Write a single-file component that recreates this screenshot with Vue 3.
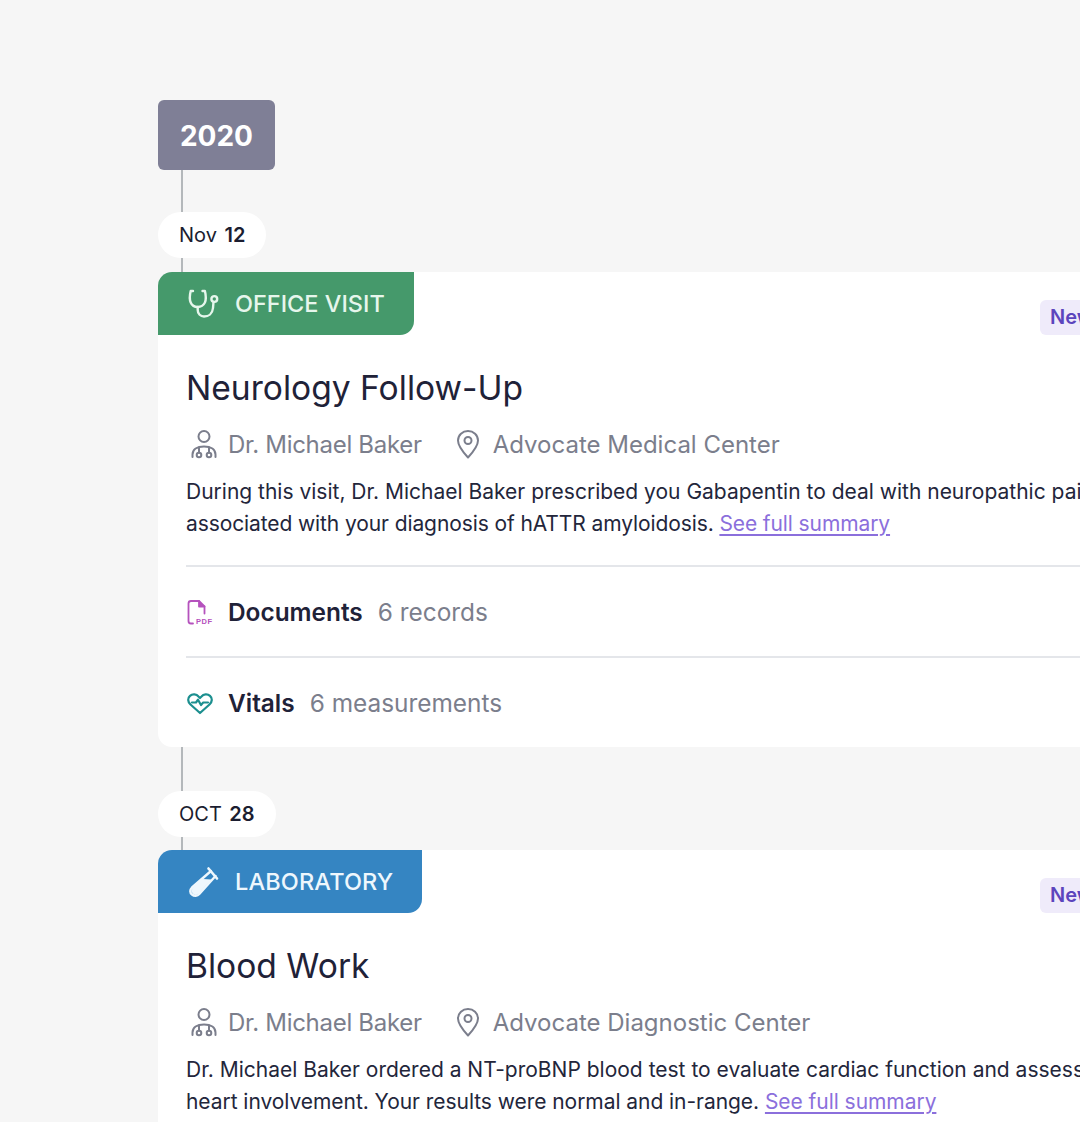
<script setup>
const visits = [
  {
    date: 'Nov',
    day: '12',
    kind: 'office',
    label: 'OFFICE VISIT',
    title: 'Neurology Follow-Up',
    place: 'Advocate Medical Center',
    lines: [
      'During this visit, Dr. Michael Baker prescribed you Gabapentin to deal with neuropathic pain',
      'associated with your diagnosis of hATTR amyloidosis.'
    ]
  },
  {
    date: 'OCT',
    day: '28',
    kind: 'lab',
    label: 'LABORATORY',
    title: 'Blood Work',
    place: 'Advocate Diagnostic Center',
    lines: [
      'Dr. Michael Baker ordered a NT-proBNP blood test to evaluate cardiac function and assess',
      'heart involvement. Your results were normal and in-range.'
    ]
  }
]
</script>

<template>
  <div class="page">
    <div class="year">2020</div>

    <template v-for="(v, i) in visits" :key="v.title">
      <div class="line" :class="i === 0 ? 'first' : 'next'"></div>
      <div class="pill"><span>{{ v.date }}</span><b>{{ v.day }}</b></div>
      <div class="line" :class="i === 0 ? 'short' : 'shorter'"></div>

      <div class="card" :class="i === 0 ? 'closed' : 'open'">
        <div class="head">
          <div class="tag" :class="v.kind">
            <svg v-if="v.kind === 'office'" width="32" height="32" viewBox="0 0 32 32" fill="none" stroke="currentColor" stroke-width="2.4" stroke-linecap="round" stroke-linejoin="round">
              <path d="M6 3H3.700C2.700 7 2.200 11 3.700 14.500 5 17.500 8 19 10.700 19s5.700-1.500 7.200-4.500C19.400 11 18.900 7 17.900 3H15.500" />
              <path d="M10.700 19v3c0 4 3 6.500 6.300 6.500 4.500 0 8.500-3 9-8.500l.5-6" />
              <circle cx="27.300" cy="11" r="2.900" />
            </svg>
            <svg v-else width="32" height="32" viewBox="0 0 32 32" fill="currentColor" stroke="currentColor" stroke-linecap="round" stroke-linejoin="round">
              <path d="M21.500 2.500l8.500 10" fill="none" stroke-width="2.600" />
              <path d="M24 5L5 21.500c-2.300 2.300-2.300 5.300 0 7 2.300 1.900 5.300 1.700 7.300-.5L28.500 10" fill="none" stroke-width="2.400" />
              <path d="M14.500 13.500l9.500.5L12 27c-1.800 1.800-4.300 2-6 .6-1.700-1.400-1.700-4 .1-5.800l8.400-8.300z" stroke-width="1" />
            </svg>
            <span>{{ v.label }}</span>
          </div>
          <div class="badge">New</div>
        </div>

        <div class="body">
          <h2>{{ v.title }}</h2>

          <div class="meta">
            <span class="who">
              <svg width="30" height="32" viewBox="0 0 30 32" fill="none" stroke="#7b7e8c" stroke-width="2" stroke-linecap="round">
                <circle cx="15" cy="8.500" r="5.500" />
                <path d="M3.500 29v-2.500c0-5 4.500-8 11.500-8s11.500 3 11.500 8V29" />
                <circle cx="10" cy="27" r="2.300" />
                <circle cx="20" cy="27" r="2.300" />
                <path d="M10 24.500v-5M20 24.500v-5" />
              </svg>
              <span class="name">Dr. Michael Baker</span>
            </span>
            <span class="where">
              <svg width="26" height="32" viewBox="0 0 26 32" fill="none" stroke="#7b7e8c" stroke-width="2" stroke-linejoin="round">
                <path d="M13 29.500C7 23 3 18 3 12.500 3 7 7.500 3 13 3s10 4 10 9.500C23 18 19 23 13 29.500z" />
                <circle cx="13" cy="12.500" r="3.500" />
              </svg>
              {{ v.place }}
            </span>
          </div>

          <p class="text">
            {{ v.lines[0] }}<br />
            <span class="second">{{ v.lines[1] }} <a href="#" class="more">See full summary</a></span>
          </p>

          <template v-if="i === 0">
            <div class="row docs">
              <svg width="28" height="28" viewBox="0 0 28 28" fill="none" stroke="#b552bd" stroke-width="1.800" stroke-linecap="round" stroke-linejoin="round">
                <path d="M7 25.500H5C3 25.500 2.500 24.500 2.500 23V5.500C2.500 4 3.500 3 5 3H13l5.500 5.500v7" />
                <path d="M13 3v5.500h5.500" fill="#b552bd" />
                <text x="10" y="25.500" class="pdf">PDF</text>
              </svg>
              <strong>Documents</strong>
              <span>6 records</span>
            </div>
            <div class="row">
              <svg width="28" height="28" viewBox="0 0 28 28" fill="none" stroke="#1c8f8f" stroke-width="2.200" stroke-linecap="round" stroke-linejoin="round">
                <path d="M14 24L4.500 15.500C1.500 12.500 1.500 9 4 6.800c2.500-2.200 6.500-1.800 8.500.7L14 9l1.500-1.500c2-2.500 6-2.900 8.500-.7 2.500 2.200 2.500 5.700-.5 8.700L14 24z" />
                <path d="M6 13.500h4l2-2.800 3 5.300 2.200-2.500H22" />
              </svg>
              <strong>Vitals</strong>
              <span>6 measurements</span>
            </div>
          </template>
        </div>
      </div>
    </template>
  </div>
</template>

<style>
html, body {
  margin: 0;
  background: #f6f6f6;
  overflow: hidden;
}
</style>

<style scoped>
.page {
  width: 1080px;
  height: 1122px;
  box-sizing: border-box;
  padding: 100px 0 0 158px;
  overflow: hidden;
  font-family: Inter, "Noto Sans", sans-serif;
  color: #1f2238;
}

.year {
  width: 117px;
  height: 70px;
  border-radius: 6px;
  background: #7f7f96;
  color: #fff;
  font-size: 28px;
  font-weight: 700;
  line-height: 72px;
  text-align: center;
}

.line {
  width: 2px;
  margin-left: 23px;
  background: #b4b8bb;
}
.line.first { height: 42px; }
.line.next { height: 44px; }
.line.short { height: 14px; }
.line.shorter { height: 13px; }

.pill {
  display: flex;
  width: fit-content;
  gap: 7.5px;
  height: 46px;
  align-items: center;
  padding: 0 21px;
  border-radius: 23px;
  background: #fff;
  font-size: 20px;
  color: #1b1d30;
}
.pill b { font-weight: 600; }

.card {
  width: 1000px;
  background: #fff;
}
.card.closed { border-radius: 14px; }
.card.open {
  border-radius: 14px 14px 0 0;
  padding-bottom: 80px;
}
.open .second { letter-spacing: -0.05px; }

.head {
  display: flex;
  align-items: flex-start;
  justify-content: space-between;
  padding-right: 28px;
}

.tag {
  display: flex;
  align-items: center;
  gap: 16px;
  height: 63px;
  box-sizing: border-box;
  padding: 0 29px;
  border-radius: 14px 0 14px 0;
  font-size: 23.5px;
  font-weight: 500;
}
.tag.office {
  background: #45996b;
  color: #e6f6ec;
}
.tag.lab {
  background: #3585c2;
  color: #eef7fd;
  letter-spacing: 0.15px;
}

.badge {
  margin-top: 28px;
  width: 90px;
  height: 35px;
  box-sizing: border-box;
  padding-left: 10px;
  border-radius: 6px;
  background: #efebfa;
  color: #5c45bd;
  font-size: 20px;
  font-weight: 600;
  line-height: 35px;
}

.body { padding-left: 28px; }

h2 {
  margin: 30px 0 0;
  font-size: 33.6px;
  font-weight: 400;
  line-height: 46px;
  color: #1f2238;
}

.meta {
  display: flex;
  gap: 33px;
  margin-top: 13px;
  height: 40px;
  align-items: center;
  font-size: 24px;
  color: #7b7e8c;
}
.meta > span {
  display: flex;
  align-items: center;
}
.who svg {
  margin-left: 2.500px;
  margin-right: 9.500px;
}
.name { letter-spacing: -0.3px; }
.where svg { margin-right: 12px; }

.text {
  margin: 12px 0 0;
  font-size: 21px;
  line-height: 32px;
  white-space: nowrap;
  color: #23263b;
}
.second { letter-spacing: -0.1px; }
.more {
  color: #8b6fdc;
  text-decoration: underline;
  text-underline-offset: 3px;
}

.row {
  display: flex;
  align-items: center;
  height: 89px;
  border-top: 2px solid #e4e6ea;
  font-size: 24.400px;
  color: #7b7e8c;
}
.docs { margin-top: 25px; }
.row svg { margin-right: 14px; }
.row strong {
  margin-right: 15px;
  font-weight: 600;
  color: #1f2238;
}
.pdf {
  font-family: "Liberation Sans", sans-serif;
  font-size: 7.500px;
  font-weight: 700;
  letter-spacing: 0.5px;
  fill: #b552bd;
  stroke: none;
}
</style>
